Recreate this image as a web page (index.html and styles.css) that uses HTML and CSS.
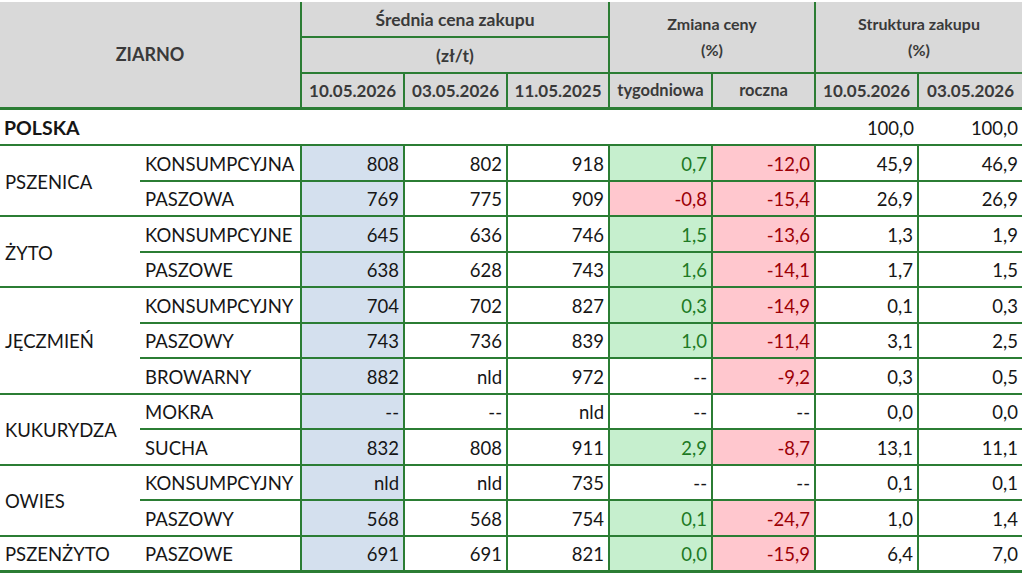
FILE: index.html
```html
<!DOCTYPE html>
<html lang="pl">
<head>
<meta charset="utf-8">
<title>Ceny zbóż</title>
<link rel="stylesheet" href="styles.css">
</head>
<body>
<table class="grid">
  <colgroup>
    <col class="c-group"><col class="c-type">
    <col class="c-num"><col class="c-num"><col class="c-num3">
    <col class="c-num"><col class="c-num">
    <col class="c-num"><col class="c-last">
  </colgroup>
  <thead>
    <tr class="h1">
      <th rowspan="3" colspan="2" class="ziarno">ZIARNO</th>
      <th colspan="3" class="vl t-mid">Średnia cena zakupu</th>
      <th colspan="2" rowspan="2" class="vl t-two">Zmiana ceny<br>(%)</th>
      <th colspan="2" rowspan="2" class="vl t-two">Struktura zakupu<br>(%)</th>
    </tr>
    <tr class="h2">
      <th colspan="3" class="vl t-mid">(zł/t)</th>
    </tr>
    <tr class="h3">
      <th class="vl date">10.05.2026</th>
      <th class="vl date">03.05.2026</th>
      <th class="vl date">11.05.2025</th>
      <th class="vl t-small">tygodniowa</th>
      <th class="vl t-small">roczna</th>
      <th class="vl date">10.05.2026</th>
      <th class="vl date">03.05.2026</th>
    </tr>
  </thead>
  <tbody>
    <tr class="polska">
      <td colspan="2" class="name b">POLSKA</td>
      <td></td><td></td><td></td><td></td><td></td>
      <td class="num">100,0</td><td class="num">100,0</td>
    </tr>

    <tr>
      <td rowspan="2" class="group">PSZENICA</td>
      <td class="type">KONSUMPCYJNA</td>
      <td class="num vl blue">808</td><td class="num vl">802</td><td class="num vl">918</td>
      <td class="num vl up">0,7</td><td class="num vl down">-12,0</td>
      <td class="num vl">45,9</td><td class="num vl">46,9</td>
    </tr>
    <tr>
      <td class="type">PASZOWA</td>
      <td class="num vl blue">769</td><td class="num vl">775</td><td class="num vl">909</td>
      <td class="num vl down">-0,8</td><td class="num vl down">-15,4</td>
      <td class="num vl">26,9</td><td class="num vl">26,9</td>
    </tr>

    <tr>
      <td rowspan="2" class="group">ŻYTO</td>
      <td class="type">KONSUMPCYJNE</td>
      <td class="num vl blue">645</td><td class="num vl">636</td><td class="num vl">746</td>
      <td class="num vl up">1,5</td><td class="num vl down">-13,6</td>
      <td class="num vl">1,3</td><td class="num vl">1,9</td>
    </tr>
    <tr>
      <td class="type">PASZOWE</td>
      <td class="num vl blue">638</td><td class="num vl">628</td><td class="num vl">743</td>
      <td class="num vl up">1,6</td><td class="num vl down">-14,1</td>
      <td class="num vl">1,7</td><td class="num vl">1,5</td>
    </tr>

    <tr>
      <td rowspan="3" class="group">JĘCZMIEŃ</td>
      <td class="type">KONSUMPCYJNY</td>
      <td class="num vl blue">704</td><td class="num vl">702</td><td class="num vl">827</td>
      <td class="num vl up">0,3</td><td class="num vl down">-14,9</td>
      <td class="num vl">0,1</td><td class="num vl">0,3</td>
    </tr>
    <tr>
      <td class="type">PASZOWY</td>
      <td class="num vl blue">743</td><td class="num vl">736</td><td class="num vl">839</td>
      <td class="num vl up">1,0</td><td class="num vl down">-11,4</td>
      <td class="num vl">3,1</td><td class="num vl">2,5</td>
    </tr>
    <tr>
      <td class="type">BROWARNY</td>
      <td class="num vl blue">882</td><td class="num vl">nld</td><td class="num vl">972</td>
      <td class="num vl">--</td><td class="num vl down">-9,2</td>
      <td class="num vl">0,3</td><td class="num vl">0,5</td>
    </tr>

    <tr>
      <td rowspan="2" class="group">KUKURYDZA</td>
      <td class="type">MOKRA</td>
      <td class="num vl blue">--</td><td class="num vl">--</td><td class="num vl">nld</td>
      <td class="num vl">--</td><td class="num vl">--</td>
      <td class="num vl">0,0</td><td class="num vl">0,0</td>
    </tr>
    <tr>
      <td class="type">SUCHA</td>
      <td class="num vl blue">832</td><td class="num vl">808</td><td class="num vl">911</td>
      <td class="num vl up">2,9</td><td class="num vl down">-8,7</td>
      <td class="num vl">13,1</td><td class="num vl">11,1</td>
    </tr>

    <tr>
      <td rowspan="2" class="group">OWIES</td>
      <td class="type">KONSUMPCYJNY</td>
      <td class="num vl blue">nld</td><td class="num vl">nld</td><td class="num vl">735</td>
      <td class="num vl">--</td><td class="num vl">--</td>
      <td class="num vl">0,1</td><td class="num vl">0,1</td>
    </tr>
    <tr>
      <td class="type">PASZOWY</td>
      <td class="num vl blue">568</td><td class="num vl">568</td><td class="num vl">754</td>
      <td class="num vl up">0,1</td><td class="num vl down">-24,7</td>
      <td class="num vl">1,0</td><td class="num vl">1,4</td>
    </tr>

    <tr class="last">
      <td class="group">PSZENŻYTO</td>
      <td class="type">PASZOWE</td>
      <td class="num vl blue">691</td><td class="num vl">691</td><td class="num vl">821</td>
      <td class="num vl up">0,0</td><td class="num vl down">-15,9</td>
      <td class="num vl">6,4</td><td class="num vl">7,0</td>
    </tr>
  </tbody>
</table>
</body>
</html>
```

FILE: styles.css
```css
html, body {
  margin: 0;
  padding: 0;
  background: #ffffff;
}

body {
  padding-top: 2px;
  font-family: Lato, "Open Sans", "Liberation Sans", sans-serif;
  color: #161616;
}

.grid {
  border-collapse: collapse;
  table-layout: fixed;
  width: 1022px;
}

.c-group { width: 140px; }
.c-type  { width: 161px; }
.c-num   { width: 103px; }
.c-num3  { width: 102px; }
.c-last  { width: 104px; }

/* ---------- header ---------- */
.grid th {
  background: #d9d9d9;
  color: #3a3a3a;
  font-weight: 700;
  padding: 0;
  border-bottom: 2px solid #2b7d34;
  text-align: center;
  vertical-align: middle;
  white-space: nowrap;
}

.grid th.vl { border-left: 2px solid #2b7d34; }

.h1 { height: 35px; }
.h2 { height: 36px; }
.h3 { height: 35px; }

.h3 th, .grid th.ziarno { border-bottom: 3px solid #2b7d34; }

.ziarno { font-size: 18px; }
.t-mid { font-size: 17.5px; }
.t-two { font-size: 16px; line-height: 1.65; }
.t-small { font-size: 16.5px; }
.date { font-size: 17px; }

/* ---------- body ---------- */
.grid td {
  font-size: 18.5px;
  padding: 2px 0 0 0;
  border-bottom: 2px solid #2b7d34;
  vertical-align: middle;
  white-space: nowrap;
}

.grid tbody tr { height: 35.5px; }
.grid tbody tr.polska { height: 37px; }

.grid td.vl { border-left: 2px solid #2b7d34; }

.polska td { border-left: none; }

.grid td.name {
  padding-left: 4px;
  font-size: 19.5px;
  font-weight: 700;
}

.grid td.group { padding-left: 5px; }
.grid td.type { padding-left: 5px; }

.num { text-align: right; }
.grid td.num { padding-right: 4px; }

.blue { background: #d4e0ee; }
.up   { background: #c6efce; color: #1e7a24; }
.down { background: #ffc7ce; color: #9c0006; }

.last td { border-bottom: 3px solid #2b7d34; }
```
